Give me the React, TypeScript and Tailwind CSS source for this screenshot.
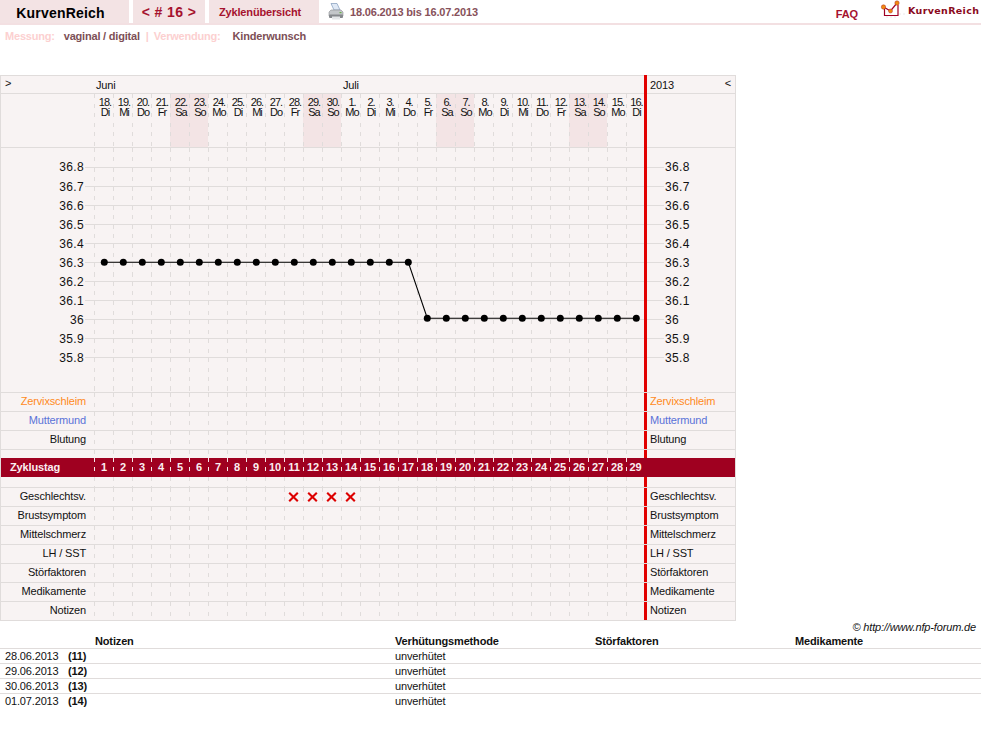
const days = [
  ["18.", "Di"], ["19.", "Mi"], ["20.", "Do"], ["21.", "Fr"], ["22.", "Sa"], ["23.", "So"], ["24.", "Mo"], ["25.", "Di"],
  ["26.", "Mi"], ["27.", "Do"], ["28.", "Fr"], ["29.", "Sa"], ["30.", "So"], ["1.", "Mo"], ["2.", "Di"], ["3.", "Mi"],
  ["4.", "Do"], ["5.", "Fr"], ["6.", "Sa"], ["7.", "So"], ["8.", "Mo"], ["9.", "Di"], ["10.", "Mi"], ["11.", "Do"],
  ["12.", "Fr"], ["13.", "Sa"], ["14.", "So"], ["15.", "Mo"], ["16.", "Di"],
];

const temps = ["36.8", "36.7", "36.6", "36.5", "36.4", "36.3", "36.2", "36.1", "36", "35.9", "35.8"];
const sex = [10, 11, 12, 13];
const notes = [
  ["28.06.2013", "(11)"],
  ["29.06.2013", "(12)"],
  ["30.06.2013", "(13)"],
  ["01.07.2013", "(14)"],
];
const dash = "bg-[repeating-linear-gradient(to_bottom,#e0dcdb_0,#e0dcdb_4px,transparent_4px,transparent_9.5px)] bg-[length:1px_100%] bg-left bg-no-repeat";
const dashLight = "bg-[repeating-linear-gradient(to_bottom,#f6e6e8_0,#f6e6e8_4px,transparent_4px,transparent_9.5px)] bg-[length:1px_100%] bg-left bg-no-repeat";

function Cols({ line, render }: { line?: boolean; render?: (i: number) => React.ReactNode }) {
  return (
    <div className={`flex w-[550px] shrink-0 ${line ? "border-b border-[#e0dcdb]" : ""}`}>
      {days.map((_, i) => (
        <div key={i} className={`${i === 28 ? "w-[18px]" : "w-[19px]"} ${dash} flex items-center justify-center`}>
          {render?.(i)}
        </div>
      ))}
    </div>
  );
}

function Row({ label, color, cross }: { label: string; color: string; cross?: boolean }) {
  return (
    <div className="flex h-[19px] border-b border-[#e0dcdb]">
      <div className={`w-[93px] pr-[8px] pt-[1px] text-right ${color}`}>{label}</div>
      <Cols
        render={(i) =>
          cross && sex.includes(i) ? (
            <svg width="11" height="10" viewBox="0 0 11 10">
              <path d="M1.2 0.8 L9.8 9.2 M9.8 0.8 L1.2 9.2" stroke="#dd0000" strokeWidth="2.1" />
            </svg>
          ) : null
        }
      />
      <div className={`flex-1 border-l-[3px] border-[#e10000] pl-[3px] pt-[1px] ${color}`}>{label}</div>
    </div>
  );
}

function Spacer({ h, line }: { h: string; line?: boolean }) {
  return (
    <div className={`flex ${h} ${line ? "border-b border-[#e0dcdb]" : ""}`}>
      <div className="w-[93px]" />
      <Cols />
      <div className="flex-1 border-l-[3px] border-[#e10000]" />
    </div>
  );
}

function TempRow({ t, first }: { t: string; first: boolean }) {
  return (
    <div className={`flex ${first ? "h-[20px]" : "h-[19px]"}`}>
      <div className="flex w-[93px] justify-end">
        <span className="w-[84px] translate-y-[10px] pr-[1px] text-right text-[12px] leading-[19px] tracking-[0.35px]">{t}</span>
        <span className="w-[9px] border-b border-[#e0dcdb]" />
      </div>
      <Cols line />
      <div className="flex flex-1 border-l-[3px] border-[#e10000]">
        <span className="w-[17px] border-b border-[#e0dcdb]" />
        <span className="translate-y-[10px] pl-[1px] text-[12px] leading-[19px] tracking-[0.35px]">{t}</span>
      </div>
    </div>
  );
}

function Printer() {
  return (
    <svg width="16" height="17" viewBox="0 0 16 17">
      <path d="M3 0.5 L9 0.5 L12 7 L6 7 Z" fill="#dfe9f6" stroke="#8ea5c2" strokeWidth="0.8" />
      <path d="M1 9 L3 7 L13 7 L15 9 L15 13 L1 13 Z" fill="#c3c6c9" stroke="#8b8e92" strokeWidth="0.6" />
      <rect x="1" y="11.5" width="14" height="3.5" rx="1" fill="#85888c" />
      <rect x="4" y="13.5" width="8" height="3" fill="#e4e6e8" />
      <rect x="11.5" y="9" width="2" height="1.2" fill="#6ab04c" />
    </svg>
  );
}

function Logo() {
  return (
    <svg width="28" height="20" viewBox="0 0 28 20">
      <path d="M19 14 H26 M6 17 H18" fill="none" stroke="#ece8e8" strokeWidth="1" strokeDasharray="2 2" />
      <path d="M4.5 8 L4.5 15.5 L18 15.5 L18 5" fill="none" stroke="#a00024" strokeWidth="1.2" />
      <path d="M3.5 7 L10.5 11 L17 3" fill="none" stroke="#a00024" strokeWidth="1.2" />
      <circle cx="3.5" cy="7" r="2.2" fill="#f08a10" stroke="#b0302a" strokeWidth="0.5" />
      <circle cx="10.5" cy="11" r="2" fill="#f08a10" stroke="#b0302a" strokeWidth="0.5" />
      <circle cx="17" cy="3" r="2.2" fill="#f08a10" stroke="#b0302a" strokeWidth="0.5" />
    </svg>
  );
}

export default function App() {
  const pts = days.map((_, i) => ({ x: 103.3 + 19 * i, y: i < 17 ? 114.3 : 170.3 }));

  return (
    <div className="h-[740px] w-[981px] overflow-hidden bg-white font-['Liberation_Sans',Arial,sans-serif] text-[11px] leading-[15px] tracking-[-0.15px] text-[#111]">
      {/* top bar */}
      <div className="flex h-[25px] border-b-2 border-[#f3e0e2]">
        <div className="flex w-[129px] items-center justify-center bg-[#f3e3e4] pr-[8px] pt-[3px] text-[14px] font-bold tracking-[0.2px] text-black">KurvenReich</div>
        <div className="ml-[4px] flex w-[72px] items-center justify-center bg-[#f3e3e4] pt-[1px] text-[14px] font-bold tracking-[0.4px] text-[#a5122e]">&lt; # 16 &gt;</div>
        <div className="ml-[4px] flex w-[110px] items-center justify-center bg-[#f3e3e4] pr-[8px] pt-[1px] font-bold text-[#a5122e]">Zyklenübersicht</div>
        <div className="ml-[9px] flex items-center"><Printer /></div>
        <div className="ml-[6px] flex items-center pt-[1px] font-bold tracking-[-0.17px] text-[#87515a]">18.06.2013 bis 16.07.2013</div>
        <div className="ml-auto mr-[22px] flex items-center pt-[5px] font-bold tracking-[-0.1px] text-[#a5122e]">FAQ</div>
        <div className="mr-[1px] flex w-[100px] items-start">
          <Logo />
          <span className="pt-[3px] font-['DejaVu_Sans',sans-serif] text-[9.5px] font-bold tracking-[0.35px] text-[#8a0a20]">KurvenReich</span>
        </div>
      </div>

      <div className="flex h-[50px] pl-[5px] pt-[4px] font-bold tracking-[-0.2px]">
        <span className="text-[#fcd0d0]">Messung:</span>
        <span className="ml-[9px] text-[#7d4f56]">vaginal / digital</span>
        <span className="ml-[6px] text-[#fcd0d0]">|</span>
        <span className="ml-[5px] text-[#fcd0d0]">Verwendung:</span>
        <span className="ml-[12px] text-[#7d4f56]">Kinderwunsch</span>
      </div>

      {/* chart table */}
      <div className="w-[736px] border-x border-[#e0dcdb] bg-[#f8f3f3]">
        <div className="flex h-[19px]">
          <div className="w-[93px] border-y border-[#e0dcdb] pl-[4px] leading-[14px]">&gt;</div>
          <div className="w-[247px] border-y border-[#e0dcdb] pl-[2px] pt-[2px] leading-[15px]">Juni</div>
          <div className="w-[303px] border-y border-[#e0dcdb] pl-[2px] pt-[2px] leading-[15px]">Juli</div>
          <div className="w-[3px] bg-[#e10000]" />
          <div className="flex flex-1 justify-between border-y border-[#e0dcdb] pl-[3px] pr-[4px] pt-[2px] leading-[15px]">
            <span>2013</span>
            <span className="-mt-[1px] leading-[13px]">&lt;</span>
          </div>
        </div>
        <div className="flex h-[54px]">
          <div className="w-[93px] border-b border-[#e0dcdb]" />
          <div className="flex w-[550px] shrink-0 border-b border-[#e0dcdb]">
            {days.map(([d, w], i) => (
              <div
                key={i}
                className={`${i === 28 ? "w-[18px]" : "w-[19px]"} ${dash} ${w === "Sa" || w === "So" ? "bg-[#f3e4e5]" : ""} pl-[3px] pt-[3px] text-center leading-[10px] tracking-[-1px]`}
              >
                <div>{d}</div>
                <div>{w}</div>
              </div>
            ))}
          </div>
          <div className="w-[3px] bg-[#e10000]" />
          <div className="flex-1 border-b border-[#e0dcdb]" />
        </div>

        {/* temperature curve */}
        <div className="relative">
          {temps.map((t, i) => (
            <TempRow key={t} t={t} first={i === 0} />
          ))}
          <Spacer h="h-[35px]" line />
          <svg className="pointer-events-none absolute left-0 top-0" width="734" height="244">
            <polyline points={pts.map((p) => `${p.x},${p.y}`).join(" ")} fill="none" stroke="#000" strokeWidth="1.1" />
            {pts.map((p, i) => (
              <circle key={i} cx={p.x} cy={p.y} r="3.5" fill="#000" />
            ))}
          </svg>
        </div>

        <Row label="Zervixschleim" color="text-[#ff8a1c]" />
        <Row label="Muttermund" color="text-[#5a72d8]" />
        <Row label="Blutung" color="text-[#111]" />
        <Spacer h="h-[8px]" />

        <div className="flex h-[19px] bg-[#9f0020] font-bold text-[#fbeef0]">
          <div className="w-[93px] pl-[9px] pt-[2px]">Zyklustag</div>
          <div className="flex w-[550px] shrink-0">
            {days.map((_, i) => (
              <div key={i} className={`${i === 28 ? "w-[18px]" : "w-[19px]"} ${dashLight} pl-[1px] pt-[2px] text-center`}>
                {i + 1}
              </div>
            ))}
          </div>
        </div>

        <Spacer h="h-[11px]" line />
        <Row label="Geschlechtsv." color="text-[#111]" cross />
        <Row label="Brustsymptom" color="text-[#111]" />
        <Row label="Mittelschmerz" color="text-[#111]" />
        <Row label="LH / SST" color="text-[#111]" />
        <Row label="Störfaktoren" color="text-[#111]" />
        <Row label="Medikamente" color="text-[#111]" />
        <Row label="Notizen" color="text-[#111]" />
      </div>

      <div className="h-[13px] pr-[5px] text-right italic leading-[13px]">© http://www.nfp-forum.de</div>

      {/* notes table */}
      <div className="grid h-[15px] grid-cols-[95px_300px_200px_200px_1fr] border-b border-[#e0dcdb] font-bold leading-[14px]">
        <div />
        <div>Notizen</div>
        <div>Verhütungsmethode</div>
        <div>Störfaktoren</div>
        <div>Medikamente</div>
      </div>
      {notes.map(([date, day], i) => (
        <div
          key={date}
          className={`grid h-[15px] grid-cols-[95px_300px_200px_200px_1fr] leading-[14px] ${i < notes.length - 1 ? "border-b border-[#e0dcdb]" : ""}`}
        >
          <div className="flex">
            <span className="w-[68px] pl-[5px]">{date}</span>
            <span className="font-bold">{day}</span>
          </div>
          <div />
          <div>unverhütet</div>
        </div>
      ))}
    </div>
  );
}
